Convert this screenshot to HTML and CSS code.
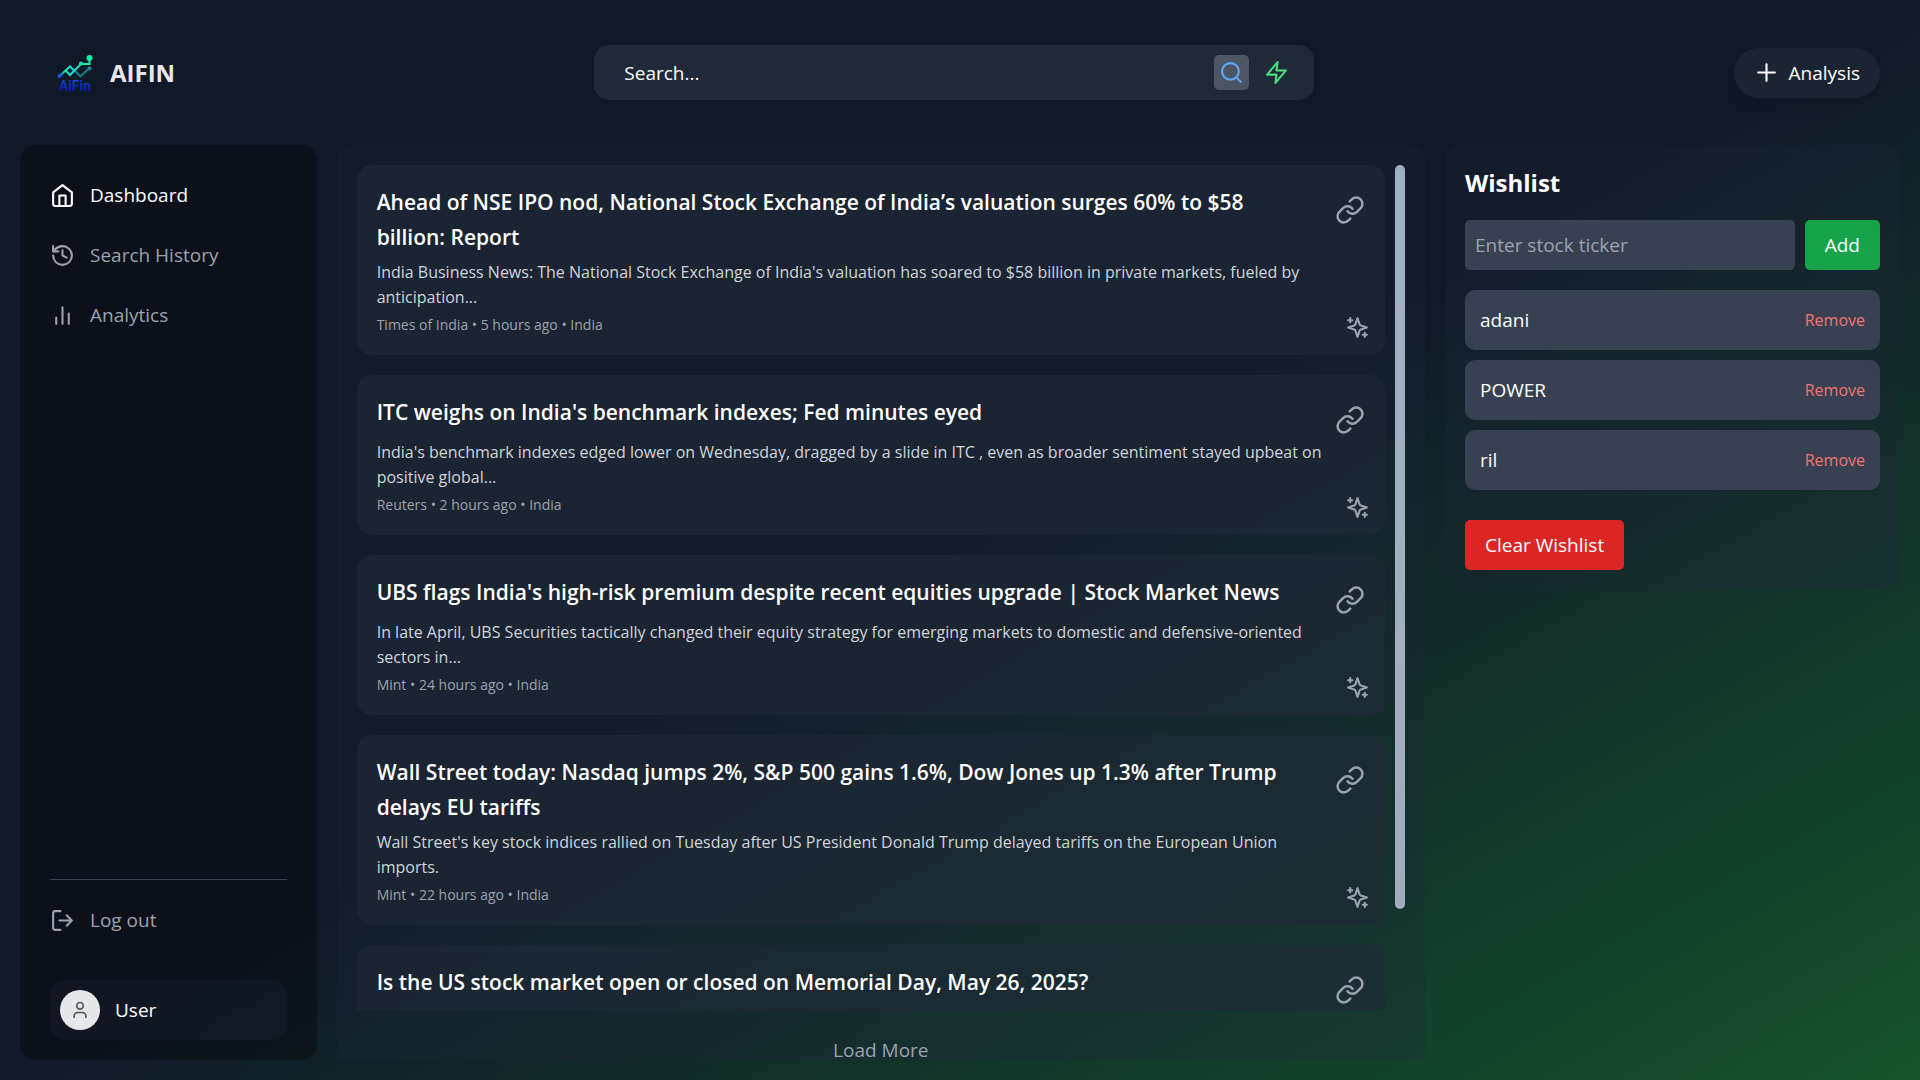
FILE: index.html
```html
<!DOCTYPE html>
<html lang="en">
<head>
  <meta charset="UTF-8" />
  <meta name="viewport" content="width=device-width, initial-scale=1.0"/>
  <title>AIFIN</title>
  <link rel="stylesheet" href="styles.css">
</head>
<body>
  <svg class="sprite" aria-hidden="true">
    <symbol id="icon-link" viewBox="0 0 24 24">
      <path d="M10 13a5 5 0 0 0 7.54.54l3-3a5 5 0 0 0-7.07-7.07l-1.72 1.71"/>
      <path d="M14 11a5 5 0 0 0-7.54-.54l-3 3a5 5 0 0 0 7.07 7.07l1.71-1.71"/>
    </symbol>
    <symbol id="icon-sparkles" viewBox="0 0 24 24">
      <path d="M12 3l-1.912 5.813a2 2 0 0 1-1.275 1.275L3 12l5.813 1.912a2 2 0 0 1 1.275 1.275L12 21l1.912-5.813a2 2 0 0 1 1.275-1.275L21 12l-5.813-1.912a2 2 0 0 1-1.275-1.275L12 3Z"/>
      <path d="M5 3v4M3 5h4M19 17v4M17 19h4"/>
    </symbol>
  </svg>

  <div class="app">
    <header class="header">
      <a href="#" class="brand">
        <svg class="logo" viewBox="0 0 50 50" aria-hidden="true">
          <defs>
            <linearGradient id="line" gradientUnits="userSpaceOnUse" x1="9" y1="0" x2="40" y2="0">
              <stop offset="0" stop-color="#0a5cf0"/>
              <stop offset="0.2" stop-color="#12e89a"/>
              <stop offset="0.4" stop-color="#14d8e0"/>
              <stop offset="0.65" stop-color="#10e6b8"/>
              <stop offset="1" stop-color="#12f0a0"/>
            </linearGradient>
            <linearGradient id="word" x1="0" y1="0" x2="0" y2="1">
              <stop offset="0" stop-color="#0a50e0"/>
              <stop offset="1" stop-color="#0410b8"/>
            </linearGradient>
          </defs>
          <path class="logo-back" d="M24 22l6.300 6.300 9.200-8"/>
          <path class="logo-line" d="M9.500 28l10.500-9.500 4 4M16 23l4 4 11-11h8.500V9.500"/>
          <circle cx="9.500" cy="28" r="2" fill="#0a5cf0"/>
          <circle cx="31" cy="15.500" r="2" fill="#10e6b8"/>
          <circle cx="39.500" cy="20.500" r="2" fill="#0e8f96"/>
          <circle cx="39.500" cy="10" r="3" fill="#12f0a0"/>
          <text x="9" y="43" fill="url(#word)">AiFin</text>
        </svg>
        <span>AIFIN</span>
      </a>

      <form class="search">
        <input type="text" placeholder="Search..." aria-label="Search">
        <button type="button" class="mode active" aria-label="Normal search">
          <svg class="icon" viewBox="0 0 24 24"><circle cx="11" cy="11" r="8"/><path d="m21 21-4.300-4.300"/></svg>
        </button>
        <button type="button" class="mode fast" aria-label="Fast search">
          <svg class="icon" viewBox="0 0 24 24"><path d="M13 2L3 14h9l-1 8 10-12h-9l1-8z"/></svg>
        </button>
      </form>

      <button class="analysis">
        <svg class="icon" viewBox="0 0 24 24"><path d="M12 4v16M4 12h16"/></svg>
        <span>Analysis</span>
      </button>
    </header>

    <div class="content">
      <aside class="sidebar">
        <nav class="nav">
          <a href="#" class="nav-item current">
            <svg class="icon" viewBox="0 0 24 24"><path d="M3 9l9-7 9 7v11a2 2 0 0 1-2 2H5a2 2 0 0 1-2-2z"/><path d="M9 22V12h6v10"/></svg>
            <span>Dashboard</span>
          </a>
          <a href="#" class="nav-item">
            <svg class="icon" viewBox="0 0 24 24"><path d="M3 12a9 9 0 1 0 9-9 9.750 9.750 0 0 0-6.740 2.740L3 8"/><path d="M3 3v5h5"/><path d="M12 7v5l4 2"/></svg>
            <span>Search History</span>
          </a>
          <a href="#" class="nav-item">
            <svg class="icon" viewBox="0 0 24 24"><path d="M18 20V10M12 20V4M6 20v-6"/></svg>
            <span>Analytics</span>
          </a>
        </nav>

        <div class="sidebar-bottom">
          <button class="nav-item logout">
            <svg class="icon" viewBox="0 0 24 24"><path d="M10 3H5a2 2 0 0 0-2 2v14a2 2 0 0 0 2 2h5"/><path d="M16 17l5-5-5-5M21 12H9"/></svg>
            <span>Log out</span>
          </button>
          <div class="user">
            <div class="avatar">
              <svg class="icon" viewBox="0 0 24 24"><path d="M19 21v-2a4 4 0 0 0-4-4H9a4 4 0 0 0-4 4v2"/><circle cx="12" cy="7" r="4"/></svg>
            </div>
            <span>User</span>
          </div>
        </div>
      </aside>

      <main class="feed">
        <div class="feed-body">
          <div class="articles">
            <article class="card">
              <div class="card-top">
                <h3>Ahead of NSE IPO nod, National Stock Exchange of India’s valuation surges 60% to $58 billion: Report</h3>
                <a href="#" class="link" aria-label="Open article"><svg class="icon"><use href="#icon-link"/></svg></a>
              </div>
              <p class="desc">India Business News: The National Stock Exchange of India's valuation has soared to $58 billion in private markets, fueled by anticipation...</p>
              <p class="meta">Times of India • 5 hours ago • India</p>
              <button class="sparkle" aria-label="Summarize"><svg class="icon"><use href="#icon-sparkles"/></svg></button>
            </article>

            <article class="card">
              <div class="card-top">
                <h3>ITC weighs on India's benchmark indexes; Fed minutes eyed</h3>
                <a href="#" class="link" aria-label="Open article"><svg class="icon"><use href="#icon-link"/></svg></a>
              </div>
              <p class="desc">India's benchmark indexes edged lower on Wednesday, dragged by a slide in ITC , even as broader sentiment stayed upbeat on positive global...</p>
              <p class="meta">Reuters • 2 hours ago • India</p>
              <button class="sparkle" aria-label="Summarize"><svg class="icon"><use href="#icon-sparkles"/></svg></button>
            </article>

            <article class="card">
              <div class="card-top">
                <h3>UBS flags India's high-risk premium despite recent equities upgrade | Stock Market News</h3>
                <a href="#" class="link" aria-label="Open article"><svg class="icon"><use href="#icon-link"/></svg></a>
              </div>
              <p class="desc">In late April, UBS Securities tactically changed their equity strategy for emerging markets to domestic and defensive-oriented sectors in...</p>
              <p class="meta">Mint • 24 hours ago • India</p>
              <button class="sparkle" aria-label="Summarize"><svg class="icon"><use href="#icon-sparkles"/></svg></button>
            </article>

            <article class="card">
              <div class="card-top">
                <h3>Wall Street today: Nasdaq jumps 2%, S&amp;P 500 gains 1.6%, Dow Jones up 1.3% after Trump delays EU tariffs</h3>
                <a href="#" class="link" aria-label="Open article"><svg class="icon"><use href="#icon-link"/></svg></a>
              </div>
              <p class="desc">Wall Street's key stock indices rallied on Tuesday after US President Donald Trump delayed tariffs on the European Union imports.</p>
              <p class="meta">Mint • 22 hours ago • India</p>
              <button class="sparkle" aria-label="Summarize"><svg class="icon"><use href="#icon-sparkles"/></svg></button>
            </article>

            <article class="card cut">
              <div class="card-top">
                <h3>Is the US stock market open or closed on Memorial Day, May 26, 2025?</h3>
                <a href="#" class="link" aria-label="Open article"><svg class="icon"><use href="#icon-link"/></svg></a>
              </div>
            </article>
          </div>
          <div class="scrollbar"><div class="thumb"></div></div>
        </div>
        <button class="load-more">Load More</button>
      </main>

      <section class="wishlist">
        <h2>Wishlist</h2>
        <form class="add-form">
          <input type="text" placeholder="Enter stock ticker" aria-label="Stock ticker">
          <button type="button" class="add">Add</button>
        </form>
        <ul>
          <li><span>adani</span><button class="remove">Remove</button></li>
          <li><span>POWER</span><button class="remove">Remove</button></li>
          <li><span>ril</span><button class="remove">Remove</button></li>
        </ul>
        <button class="clear">Clear Wishlist</button>
      </section>
    </div>
  </div>
</body>
</html>
```
FILE: styles.css
```css
* {
  box-sizing: border-box;
  margin: 0;
  padding: 0;
}

body {
  font-family: "Segoe UI", "Open Sans", "Noto Sans", sans-serif;
  font-size: 19px;
  line-height: 30px;
  color: #fff;
}

button,
input {
  font: inherit;
  color: inherit;
  border: none;
  background: none;
}

button {
  cursor: pointer;
}

a {
  color: inherit;
  text-decoration: none;
}

.sprite {
  display: none;
}

.icon {
  display: block;
  flex-shrink: 0;
  width: 25px;
  height: 25px;
  fill: none;
  stroke: currentColor;
  stroke-width: 2;
  stroke-linecap: round;
  stroke-linejoin: round;
}

.app {
  display: flex;
  flex-direction: column;
  height: 100vh;
  background: linear-gradient(to bottom right, #111827, #111827, #14532d);
}

/* header */
.header {
  display: flex;
  align-items: center;
  justify-content: space-between;
  padding: 45px 40px 45px 50px;
}

.brand {
  display: flex;
  align-items: center;
  gap: 10px;
  font-size: 24px;
  font-weight: 700;
  color: #e5e7eb;
}

.logo {
  width: 50px;
  height: 50px;
}

.logo text {
  font-family: Roboto, sans-serif;
  font-size: 14px;
  font-weight: 500;
}

.logo-line,
.logo-back {
  fill: none;
  stroke: url(#line);
  stroke-width: 2;
}

.logo-back {
  stroke: #0e7f8c;
}

.search {
  display: flex;
  align-items: center;
  gap: 10px;
  width: 720px;
  max-width: 50%;
  height: 55px;
  padding: 0 20px 0 30px;
  background: #1f2937;
  border-radius: 15px;
}

.search input {
  flex: 1;
  min-width: 0;
  outline: none;
}

.search input::placeholder {
  color: #fff;
}

.mode {
  padding: 5px;
  border-radius: 5px;
}

.mode.active {
  background: #4b5563;
  color: #60a5fa;
}

.mode.fast {
  color: #4ade80;
}

.analysis {
  display: flex;
  align-items: center;
  gap: 10px;
  padding: 10px 20px;
  background: rgba(31, 41, 55, 0.7);
  border-radius: 25px;
  box-shadow: 0 12px 18px -4px rgba(0, 0, 0, 0.1), 0 5px 7px -5px rgba(0, 0, 0, 0.1);
}

/* columns */
.content {
  flex: 1;
  min-height: 0;
  display: grid;
  grid-template-columns: repeat(12, 1fr);
  gap: 20px;
  padding: 0 20px 20px;
}

.sidebar {
  grid-column: span 2;
  display: flex;
  flex-direction: column;
  justify-content: space-between;
  padding: 30px 30px 20px;
  background: rgba(0, 0, 0, 0.3);
  border-radius: 15px;
}

.nav {
  display: flex;
  flex-direction: column;
  gap: 20px;
}

.nav-item {
  display: flex;
  align-items: center;
  gap: 15px;
  height: 40px;
  color: #9ca3af;
}

.nav-item.current {
  color: #fff;
}

.sidebar-bottom {
  border-top: 1px solid #374151;
  padding-top: 20px;
}

.user {
  display: flex;
  align-items: center;
  gap: 15px;
  margin-top: 40px;
  padding: 10px;
  background: rgba(31, 41, 55, 0.3);
  border-radius: 15px;
}

.avatar {
  display: flex;
  align-items: center;
  justify-content: center;
  width: 40px;
  height: 40px;
  border-radius: 50%;
  background: #e5e7eb;
  color: #4b5563;
}

.avatar .icon {
  width: 20px;
  height: 20px;
}

/* news feed */
.feed {
  grid-column: span 7;
  display: flex;
  flex-direction: column;
  min-height: 0;
  padding: 20px 20px 0;
  background: rgba(31, 41, 55, 0.3);
  border-radius: 15px 15px 0 0;
}

.feed-body {
  flex: 1;
  min-height: 0;
  display: flex;
  gap: 10px;
}

.articles {
  flex: 1;
  min-height: 0;
  overflow: hidden;
}

.card {
  position: relative;
  margin-bottom: 20px;
  padding: 20px;
  background: rgba(31, 41, 55, 0.6);
  border-radius: 15px;
}

.card.cut {
  min-height: 160px;
}

.card-top {
  display: flex;
  justify-content: space-between;
  gap: 30px;
  margin-bottom: 5px;
}

.card h3 {
  font-size: 21px;
  line-height: 35px;
  font-weight: 600;
}

.link {
  margin-top: 10px;
  color: #9ca3af;
}

.link .icon {
  width: 30px;
  height: 30px;
}

.desc {
  padding-right: 30px;
  font-size: 16px;
  line-height: 25px;
  color: #d1d5db;
}

.meta {
  margin-top: 5px;
  font-size: 14px;
  line-height: 20px;
  color: #9ca3af;
}

.sparkle {
  position: absolute;
  right: 15px;
  bottom: 15px;
  color: #9ca3af;
}

.scrollbar {
  width: 10px;
}

.thumb {
  height: 88%;
  background: #a0aec0;
  border-radius: 5px;
}

.load-more {
  height: 50px;
  padding-top: 30px;
  line-height: 20px;
  color: #9ca3af;
}

/* wishlist */
.wishlist {
  grid-column: span 3;
  align-self: start;
  padding: 20px;
  background: rgba(31, 41, 55, 0.3);
  border-radius: 15px;
}

.wishlist h2 {
  margin-bottom: 20px;
  font-size: 24px;
  line-height: 35px;
}

.add-form {
  display: flex;
  gap: 10px;
  margin-bottom: 20px;
}

.add-form input {
  flex: 1;
  min-width: 0;
  height: 50px;
  padding: 0 10px;
  background: #374151;
  border-radius: 5px;
}

.add-form input::placeholder {
  color: #9ca3af;
}

.add,
.clear {
  padding: 10px 20px;
  border-radius: 5px;
}

.add {
  background: #16a34a;
}

.clear {
  background: #dc2626;
}

.wishlist ul {
  display: flex;
  flex-direction: column;
  gap: 10px;
  margin-bottom: 30px;
  list-style: none;
}

.wishlist li {
  display: flex;
  align-items: center;
  justify-content: space-between;
  padding: 15px;
  background: #374151;
  border-radius: 10px;
}

.remove {
  font-size: 16px;
  color: #f87171;
}
```
